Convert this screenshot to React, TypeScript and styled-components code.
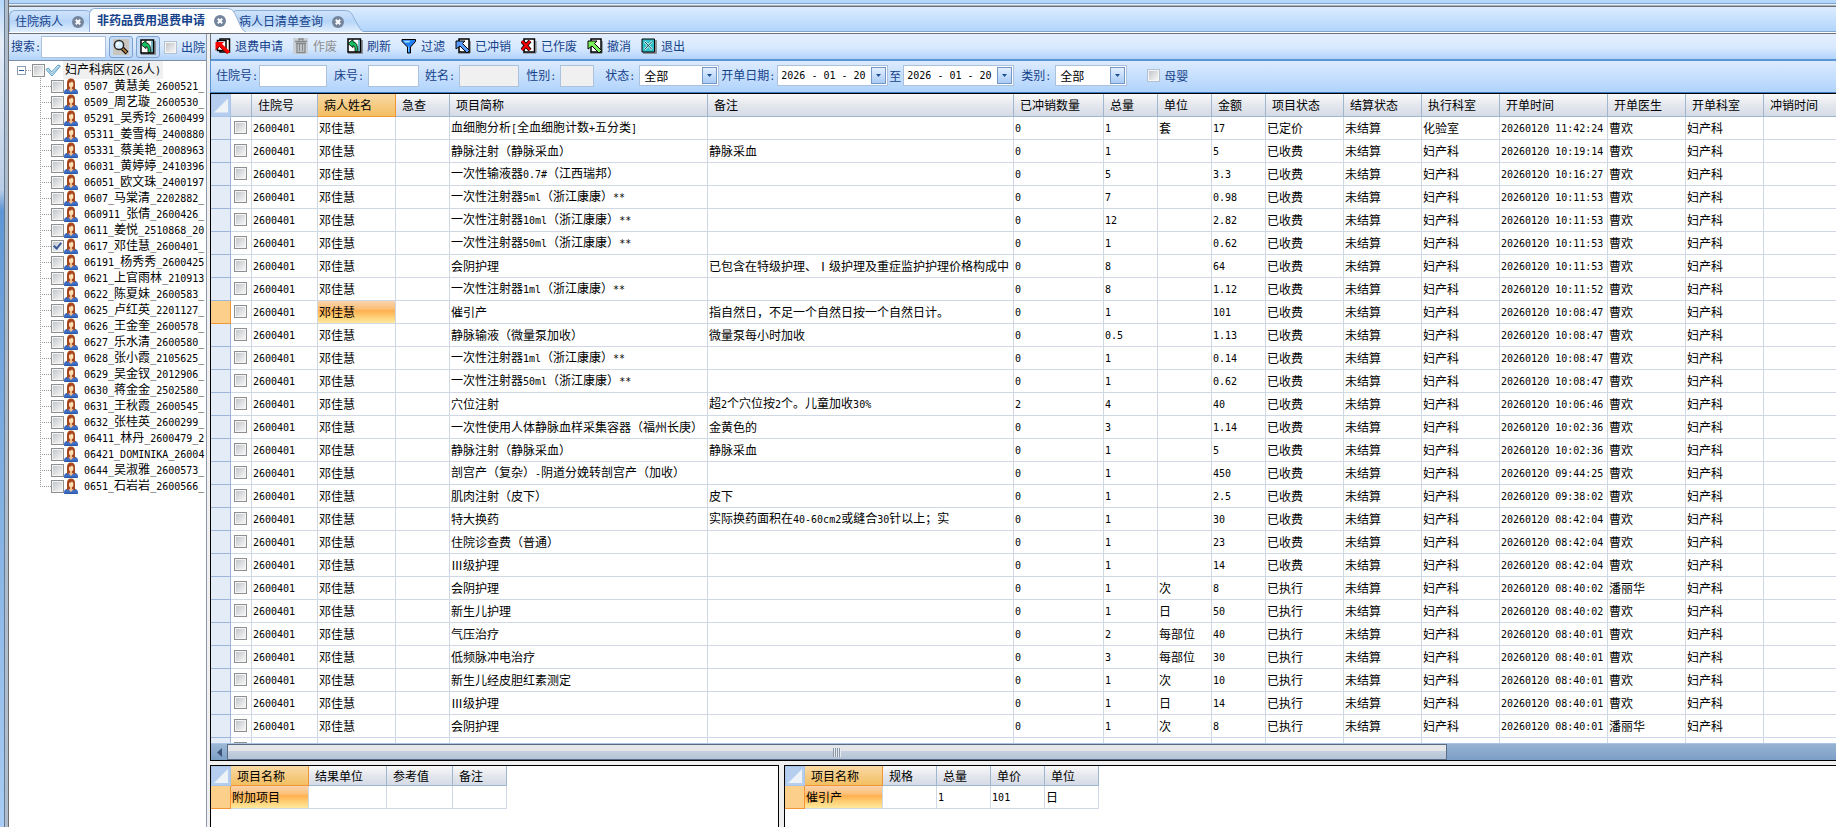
import React from "react";
import styled, { createGlobalStyle, css } from "styled-components";

const INK = "#15428b";

const GlobalStyle = createGlobalStyle`
  *, *::before, *::after { box-sizing: border-box; }
  html, body { margin: 0; height: 100%; overflow: hidden; }
  body, button, input, select, table {
    font-family: "Noto Sans CJK SC", "Liberation Sans", sans-serif;
    font-size: 12px;
    line-height: 16px;
    color: #000;
  }
`;

/* ---------- text: half-width characters take exactly half a Chinese glyph ---------- */

const Half = styled.span`
  font-family: "DejaVu Sans Mono", monospace;
  font-size: 10px;
  white-space: pre;
`;

function Mixed({ children }: { children: string }) {
  return (
    <>
      {children
        .split(/([\x20-\x7e]+)/)
        .filter(Boolean)
        .map((part, i) => (/^[\x20-\x7e]/.test(part) ? <Half key={i}>{part}</Half> : part))}
    </>
  );
}

/* ---------- window frame ---------- */

const Window = styled.div`
  display: flex;
  height: 100vh;
  overflow: hidden;
  background: #fff;
  white-space: nowrap;
`;

const LeftFrame = styled.div`
  display: flex;
  flex: 0 0 9px;
  background: linear-gradient(#b4d6fb, #e6eef8 40px, #b9cde6 190px, #5f97d6 210px, #a9cdf3);
`;

const FrameEdge = styled.div`
  width: 5px;
  margin-left: 4px;
  border-left: 1px solid #64788f;
  border-right: 1px solid #6d6e70;
  background: #aebccc;
`;

const Main = styled.div`
  flex: 1;
  min-width: 0;
  display: flex;
  flex-direction: column;
`;

const TopEdge = styled.div`
  flex: 0 0 7px;
  background: linear-gradient(#b3d6fd 3px, #7fa3cb 3px 4px, #e8f1fb 4px 5px, #aab3b8 5px 6px, #6c6f72 6px);
`;

const TabStrip = styled.nav`
  flex: 0 0 27px;
  display: flex;
  align-items: flex-end;
  padding-bottom: 2px;
  background: linear-gradient(#dcecfe, #b2d5fc 24px, #83a6cb 24px 25px, #fff 25px 26px, #6c6f75 26px);
`;

const TabShell = styled.div<{ $active?: boolean; $over?: boolean }>`
  position: relative;
  z-index: ${(p) => (p.$active ? 2 : 1)};
  display: flex;
  height: ${(p) => (p.$active ? 24 : 22)}px;
  margin-left: ${(p) => (p.$over ? -15 : 0)}px;
`;

const TabBody = styled.div<{ $active?: boolean; $over?: boolean }>`
  display: flex;
  align-items: center;
  gap: 9px;
  padding-left: ${(p) => (p.$over ? 7 : 5)}px;
  border-top: 1px solid #8fb0d6;
  border-left: 1px solid #8fb0d6;
  border-radius: 6px 0 0 0;
  background: ${(p) => (p.$active ? "#fff" : "linear-gradient(#cfe3fb, #b7d5f8 50%, #e2effd)")};
`;

const TabLabel = styled.button<{ $active?: boolean }>`
  padding: 0 0 1px;
  border: 0;
  background: none;
  color: ${INK};
  font-weight: ${(p) => (p.$active ? 700 : 400)};
`;

const CloseButton = styled.button`
  display: flex;
  padding: 0;
  border: 0;
  background: none;
`;

function CloseIcon() {
  return (
    <svg width="12" height="12" viewBox="0 0 12 12" aria-hidden="true">
      <circle cx="6" cy="6" r="6" fill="#74859c" />
      <path d="M3.8 3.8l4.4 4.4M8.2 3.8L3.8 8.2" stroke="#fff" strokeWidth="2" />
    </svg>
  );
}

function TabCap({ active }: { active?: boolean }) {
  const h = active ? 24 : 22;
  const shape = `M0 .5 C7 .5 8 4 10 8 L15 ${h - 5} Q17 ${h - 1} 20 ${h}`;
  return (
    <svg width="20" height={h} viewBox={`0 0 20 ${h}`} aria-hidden="true">
      <defs>
        <linearGradient id="tabCap" x1="0" y1="0" x2="0" y2="1">
          <stop offset="0" stopColor="#cfe3fb" />
          <stop offset=".5" stopColor="#b7d5f8" />
          <stop offset="1" stopColor="#e2effd" />
        </linearGradient>
      </defs>
      <path d={`${shape} H0Z`} fill={active ? "#fff" : "url(#tabCap)"} />
      <path d={shape} fill="none" stroke="#8fb0d6" />
    </svg>
  );
}

function Tab({ label, active, over }: { label: string; active?: boolean; over?: boolean }) {
  return (
    <TabShell $active={active} $over={over}>
      <TabBody $active={active} $over={over}>
        <TabLabel $active={active}>{label}</TabLabel>
        <CloseButton aria-label={`关闭${label}`}>
          <CloseIcon />
        </CloseButton>
      </TabBody>
      <TabCap active={active} />
    </TabShell>
  );
}

/* ---------- form parts ---------- */

const Check = styled.input.attrs({ type: "checkbox" })<{ $soft?: boolean }>`
  appearance: none;
  flex: none;
  display: block;
  position: relative;
  width: 13px;
  height: 13px;
  margin: 0;
  border: 1px solid ${(p) => (p.$soft ? "#b4c1d0" : "#8e8f8f")};
  background: linear-gradient(135deg, #c2c6cb, #f6f6f6) center / 9px 9px no-repeat #f4f4f4;
  &:checked::after {
    content: "";
    position: absolute;
    left: 3px;
    top: 0;
    width: 5px;
    height: 8px;
    border: solid #3b5a9a;
    border-width: 0 2px 2px 0;
    transform: rotate(40deg);
  }
`;

const Box = styled.input<{ $w: number }>`
  width: ${(p) => p.$w}px;
  height: 22px;
  padding: 0 3px;
  border: 1px solid #abc1de;
  background: #fff;
  &:disabled { background: #f0f0f0; }
`;

const SelectFrame = styled.div<{ $w: number }>`
  display: flex;
  align-items: center;
  width: ${(p) => p.$w}px;
  height: 21px;
  padding: 1px;
  border: 1px solid #abc1de;
  background: #fff;
`;

const PlainSelect = styled.select`
  appearance: none;
  flex: 1;
  min-width: 0;
  height: 16px;
  padding: 0 0 0 3px;
  border: 0;
  background: none;
`;

const DateInput = styled.input`
  flex: 1;
  min-width: 0;
  height: 16px;
  padding: 0 0 0 2px;
  border: 0;
  background: none;
  font-family: "DejaVu Sans Mono", monospace;
  font-size: 10px;
`;

const dropLook = css`
  display: flex;
  align-items: center;
  justify-content: center;
  flex: 0 0 15px;
  height: 17px;
  padding: 0;
  border: 1px solid #7397c6;
  background: linear-gradient(#e3effe, #a9cbf5);
`;

const DropButton = styled.button`${dropLook}`;
const DropMark = styled.span`${dropLook}`;

function DownArrow() {
  return (
    <svg width="5" height="3" viewBox="0 0 5 3" aria-hidden="true">
      <path d="M0 0h5L2.500 3z" fill="#1d4f92" />
    </svg>
  );
}

/* ---------- left panel ---------- */

const Body = styled.div`
  flex: 1;
  min-height: 0;
  display: flex;
  background: #f0f0f0;
`;

const Side = styled.aside`
  flex: 0 0 198px;
  display: flex;
  flex-direction: column;
  overflow: hidden;
  border-right: 1px solid #8a99ac;
  background: #fff;
`;

const SearchBar = styled.div`
  flex: 0 0 27px;
  display: flex;
  align-items: center;
  padding-left: 2px;
  overflow: hidden;
  border-bottom: 1px solid #7e8fa3;
  background: linear-gradient(#e3effe, #d6e8fd 50%, #b1d3fb);
  color: ${INK};
`;

const SearchLabel = styled.label`
  flex: none;
  color: ${INK};
`;

const IconButton = styled.button`
  flex: none;
  display: flex;
  align-items: center;
  justify-content: center;
  width: 24px;
  height: 22px;
  margin-left: 3px;
  padding: 0;
  border: 1px solid #7da2ce;
  border-radius: 3px;
  background: #c3dbf7;
`;

const TickLabel = styled.label`
  flex: none;
  display: flex;
  align-items: center;
  gap: 4px;
  margin-left: 4px;
`;

const Tree = styled.ul`
  margin: 0;
  padding: 1px 0 0 8px;
  list-style: none;
`;

const TreeRow = styled.div`
  display: flex;
  align-items: center;
  height: 16px;
`;

const Children = styled.ul`
  margin: 0;
  padding: 0 0 0 23px;
  list-style: none;
`;

const Connector = styled.span<{ $last?: boolean }>`
  flex: 0 0 11px;
  height: 16px;
  background:
    repeating-linear-gradient(#999 0 1px, transparent 1px 2px) 0 0 / 1px ${(p) => (p.$last ? "8px" : "16px")} no-repeat,
    repeating-linear-gradient(90deg, #999 0 1px, transparent 1px 2px) 0 8px / 11px 1px no-repeat;
`;

const Dots = styled.span`
  flex: 0 0 6px;
  height: 1px;
  background: repeating-linear-gradient(90deg, #999 0 1px, transparent 1px 2px);
`;

const Expander = styled.button`
  flex: none;
  width: 9px;
  height: 9px;
  padding: 0;
  border: 1px solid #8c9db5;
  background: linear-gradient(#2c5aa0, #2c5aa0) center / 5px 1px no-repeat #fff;
`;

const RootName = styled.span`
  margin-left: 2px;
  padding: 0 2px;
  background: #f0f0f0;
`;

const PatientName = styled.span`
  margin-left: 6px;
`;

function PersonIcon() {
  return (
    <svg width="14" height="16" viewBox="0 0 14 16" aria-hidden="true">
      <path d="M0 16v-2.500Q1 10.500 5 10.500h4q4 0 5 3V16z" fill="#3f6fc4" />
      <path d="M3 12.500V4.500Q3.400.500 7 .500t4 4v8L9 11.200H5z" fill="#a8461c" />
      <path d="M5 5Q7 4.600 8 3.500L9.300 5v2.800Q8.800 9.600 7 9.600T5 7.800z" fill="#fbdcb4" />
      <path d="M6 9h2v2l1.400.500L7 14l-2.400-2.500L6 11z" fill="#f3c08d" />
      <path d="M1 15.300h12" stroke="#2b56a5" />
    </svg>
  );
}

function DoubleCheckIcon() {
  return (
    <svg width="16" height="14" viewBox="0 0 16 14" aria-hidden="true">
      <path d="M1 6.500l2.500-1.500 3 4L13 2l2.500 1L7 13z" fill="#d6e9f5" stroke="#5b9fc4" strokeLinejoin="round" />
      <path d="M3 6.500L6.800 11 14 3.500" fill="none" stroke="#7fb6d3" />
    </svg>
  );
}

const patients = [
  "0507_黄慧美_2600521_", "0509_周艺璇_2600530_", "05291_吴秀玲_2600499", "05311_姜雪梅_2400880",
  "05331_蔡美艳_2008963", "06031_黄婷婷_2410396", "06051_欧文珠_2400197", "0607_马棠清_2202882_",
  "060911_张倩_2600426_", "0611_姜悦_2510868_20", "0617_邓佳慧_2600401_", "06191_杨秀秀_2600425",
  "0621_上官雨林_210913", "0622_陈夏妹_2600583_", "0625_卢红英_2201127_", "0626_王金奎_2600578_",
  "0627_乐水清_2600580_", "0628_张小霞_2105625_", "0629_吴金钗_2012906_", "0630_蒋金金_2502580_",
  "0631_王秋霞_2600545_", "0632_张桂英_2600299_", "06411_林丹_2600479_2", "06421_DOMINIKA_26004",
  "0644_吴淑雅_2600573_", "0651_石岩岩_2600566_",
];

function PatientTree() {
  return (
    <Tree>
      <li>
        <TreeRow>
          <Expander aria-label="折叠" />
          <Dots />
          <Check aria-label="妇产科病区" />
          <DoubleCheckIcon />
          <RootName>
            <Mixed>妇产科病区(26人)</Mixed>
          </RootName>
        </TreeRow>
        <Children>
          {patients.map((name, i) => (
            <li key={name}>
              <TreeRow>
                <Connector $last={i === patients.length - 1} />
                <Check aria-label={name} defaultChecked={name.startsWith("0617")} />
                <PersonIcon />
                <PatientName>
                  <Mixed>{name}</Mixed>
                </PatientName>
              </TreeRow>
            </li>
          ))}
        </Children>
      </li>
    </Tree>
  );
}

/* ---------- toolbar icons ---------- */

function PageArrowIcon({ color }: { color: string }) {
  return (
    <svg width="16" height="16" viewBox="0 0 16 16" aria-hidden="true">
      <path d="M3 15h12V3" fill="none" stroke="#555" />
      <path d="M4 1h10v13H4z" fill="#fff" stroke="#000" strokeWidth="1.500" />
      <path d="M1 3h9L7.500 5.500l7 7-2.500 2.500-7-7L1 11z" fill={color} stroke="#000" strokeLinejoin="miter" />
    </svg>
  );
}

function RefundIcon() {
  return (
    <svg width="16" height="16" viewBox="0 0 16 16" aria-hidden="true">
      <path d="M5 1h9.500v13H5z" fill="#fff" stroke="#000" strokeWidth="1.500" />
      <path d="M2.500 2.500h8.500v10H2.500z" fill="#fff" stroke="#000" strokeWidth="1.500" />
      <path d="M.500 4h8.500L7 6l8 7.500-2.500 2.500L4.500 8.500.500 12z" fill="#f00" />
      <path d="M.500 12l4-3.500L12.500 16" fill="none" stroke="#7a0000" />
    </svg>
  );
}

function TrashIcon() {
  return (
    <svg width="16" height="16" viewBox="0 0 16 16" aria-hidden="true">
      <path d="M0 0h15v16H0z" fill="#c9d0d8" />
      <path d="M6 2.500V1h4v1.500M2 3.500h12M4 5.500v9h8v-9M6.500 6v7M9.500 6v7M3 5.500h10" fill="none" stroke="#868686" strokeWidth="1.300" />
    </svg>
  );
}

function RefreshIcon() {
  return (
    <svg width="16" height="16" viewBox="0 0 16 16" aria-hidden="true">
      <path d="M1 15h14V2" fill="none" stroke="#777" strokeWidth="1.500" />
      <path d="M1 1h12.500v13H1z" fill="#fff" stroke="#000" strokeWidth="1.500" />
      <path d="M12 2v11" stroke="#4aa5b5" strokeWidth="1.500" />
      <path d="M1 5.500L6 1.500v2.300q5 .4 4.800 9.700H8Q8.500 8 6 7.600v2z" fill="#14c060" stroke="#000" strokeWidth=".8" />
    </svg>
  );
}

function FilterIcon() {
  return (
    <svg width="16" height="16" viewBox="0 0 16 16" aria-hidden="true">
      <path d="M1 1.500h13.500v2L9.500 9v6h-3V9L1 3.500z" fill="#1f7ff0" stroke="#000" />
      <path d="M2.500 2.800h7L8 4.500H4z" fill="#a8dcff" />
      <path d="M7.500 8.500v5" stroke="#7cc6ff" />
    </svg>
  );
}

function VoidedIcon() {
  return (
    <svg width="16" height="16" viewBox="0 0 16 16" aria-hidden="true">
      <path d="M2 15h13V3" fill="none" stroke="#777" />
      <path d="M3 1h10.500v13H3z" fill="#fff" stroke="#000" strokeWidth="1.500" />
      <path d="M1 3l8 9M9 3l-8 9" stroke="#000" strokeWidth="4" />
      <path d="M1 3l8 9M9 3l-8 9" stroke="#f00000" strokeWidth="2.600" />
    </svg>
  );
}

function ExitIcon() {
  return (
    <svg width="16" height="16" viewBox="0 0 16 16" aria-hidden="true">
      <path d="M2 15h13V2" fill="none" stroke="#777" strokeWidth="1.500" />
      <path d="M1 1h12.500v13H1z" fill="#2cc0c8" stroke="#000" />
      <path d="M3.500 3.500l7.500 8M11 3.500l-7.500 8" stroke="#d9ffff" strokeWidth="2.200" />
      <path d="M3.500 3.500l7.500 8M11 3.500l-7.500 8" stroke="#043f48" strokeWidth="1" />
    </svg>
  );
}

function SearchIcon() {
  return (
    <svg width="16" height="16" viewBox="0 0 16 16" aria-hidden="true">
      <path d="M0 0h16v16H0z" fill="#c9c6bf" />
      <path d="M9 9l5 5" stroke="#000" strokeWidth="4" />
      <path d="M9.500 9.500l4 4" stroke="#b5813a" strokeWidth="2" />
      <circle cx="6" cy="6" r="4.600" fill="#d8efff" stroke="#2a2a2a" strokeWidth="1.500" />
      <path d="M3.800 6Q4 4 6 3.800" fill="none" stroke="#fff" strokeWidth="1.500" />
    </svg>
  );
}

/* ---------- right side: toolbar and filters ---------- */

const Content = styled.main`
  flex: 1;
  min-width: 0;
  margin-left: 3px;
  display: flex;
  flex-direction: column;
`;

const Toolbar = styled.div`
  flex: 0 0 27px;
  display: flex;
  align-items: center;
  gap: 10px;
  padding: 0 0 2px 4px;
  border-left: 1px solid #6c6f75;
  border-bottom: 2px solid #5a96d6;
  background: linear-gradient(#e3effe, #d8e9fe 55%, #b1d3fb);
`;

const Tool = styled.button`
  display: flex;
  align-items: center;
  gap: 4px;
  padding: 0;
  border: 0;
  background: none;
  color: ${INK};
  &:disabled { color: #8d8d8d; }
`;

const Filters = styled.form`
  flex: 0 0 32px;
  display: flex;
  align-items: center;
  padding: 0 0 2px 5px;
  border-left: 1px solid #5a96d6;
  border-bottom: 1px solid #3f7cc0;
  background: linear-gradient(#dcebfe, #b0d3fc);
  color: ${INK};
`;

const Field = styled.label<{ $after: number; $tight?: boolean }>`
  display: flex;
  align-items: center;
  gap: ${(p) => (p.$tight ? 1 : 4)}px;
  margin-right: ${(p) => p.$after}px;
`;

const Slot = styled.div<{ $after: number }>`
  display: flex;
  align-items: center;
  gap: 2px;
  margin-right: ${(p) => p.$after}px;
`;

const tools = [
  { label: "退费申请", icon: <RefundIcon /> },
  { label: "作废", icon: <TrashIcon />, disabled: true },
  { label: "刷新", icon: <RefreshIcon /> },
  { label: "过滤", icon: <FilterIcon /> },
  { label: "已冲销", icon: <PageArrowIcon color="#5a9bff" /> },
  { label: "已作废", icon: <VoidedIcon /> },
  { label: "撤消", icon: <PageArrowIcon color="#7cf25a" /> },
  { label: "退出", icon: <ExitIcon /> },
];

function SelectBox({ width }: { width: number }) {
  return (
    <SelectFrame $w={width}>
      <PlainSelect>
        <option>全部</option>
      </PlainSelect>
      <DropMark>
        <DownArrow />
      </DropMark>
    </SelectFrame>
  );
}

function DateBox({ name }: { name: string }) {
  return (
    <SelectFrame $w={111}>
      <DateInput aria-label={name} defaultValue="2026 - 01 - 20" />
      <DropButton type="button" aria-label={`选择${name}`}>
        <DownArrow />
      </DropButton>
    </SelectFrame>
  );
}

/* ---------- tables ---------- */

const GridFrame = styled.section`
  flex: 1;
  min-height: 0;
  display: flex;
  flex-direction: column;
  border: solid #000;
  border-width: 1px 0 1px 1px;
  background: #fff;
`;

const GridScroll = styled.div`
  flex: 1;
  min-height: 0;
  overflow: hidden;
`;

const Grid = styled.table<{ $fill?: boolean }>`
  table-layout: fixed;
  border-collapse: separate;
  border-spacing: 0;
  width: ${(p) => (p.$fill ? "100%" : "0")};
  ${(p) => p.$fill && "tr > :last-child { border-right: 0; }"}
`;

const Head = styled.th<{ $hot?: boolean }>`
  height: 23px;
  padding: 0 0 0 6px;
  overflow: hidden;
  text-align: left;
  font-weight: 400;
  border: solid ${(p) => (p.$hot ? "#f29536" : "#9eb6ce")};
  border-width: 0 1px 1px 0;
  background: ${(p) => (p.$hot ? "linear-gradient(#f9d9a6, #f3bf62)" : "linear-gradient(#fafafa, #e4e7ed 50%, #d5dbe6)")};
`;

const SmallHead = styled(Head)`
  height: 20px;
`;

const Corner = styled.td`
  padding: 0;
  border: 1px solid #a9c4e9;
  background: #b5cdee;
`;

const CornerMark = styled.span`
  display: block;
  width: 14px;
  height: 14px;
  margin: 0 auto;
  background: #eef3f8;
  clip-path: polygon(100% 0, 100% 100%, 0 100%);
`;

const Cell = styled.td<{ $hot?: boolean }>`
  height: 23px;
  padding: 0 0 1px 1px;
  overflow: hidden;
  border: solid #d0d7e5;
  border-width: 0 1px 1px 0;
  background: ${(p) => (p.$hot ? "linear-gradient(#fad3ad, #fcc078 35%, #ffb050 45%, #ffd27a 75%, #ffe89c)" : "#fff")};
`;

const RowMark = styled.td<{ $hot?: boolean }>`
  height: 23px;
  padding: 0;
  border: solid ${(p) => (p.$hot ? "#f29536" : "#9eb6d8")};
  border-width: 0 1px 1px 0;
  background: ${(p) => (p.$hot ? "#fccf8b" : "#e4ecf7")};
`;

const CheckCell = styled(Cell)`
  padding-left: 3px;
`;

const ScrollTrack = styled.div`
  flex: 0 0 17px;
  display: flex;
  background: linear-gradient(#97b2d2, #7c9fc6);
  border-top: 1px solid #a9c4e4;
`;

const ScrollArrow = styled.button`
  flex: 0 0 17px;
  display: flex;
  align-items: center;
  justify-content: center;
  padding: 0;
  border: 0;
  border-right: 1px solid #5a6b86;
  background: linear-gradient(#9db7d6, #7c9fc6);
`;

const ScrollThumb = styled.div`
  flex: 0 0 75%;
  display: flex;
  align-items: center;
  justify-content: center;
  border: 1px solid #5a6b86;
  border-left: 0;
  background: linear-gradient(#e4e6ea 6px, #c4d0de 6px, #b4c4d6);
`;

const Grip = styled.span`
  width: 8px;
  height: 9px;
  background: repeating-linear-gradient(90deg, #8d97a5 0 1px, #e6ebf1 1px 2px);
`;

const columns: [string, number | undefined][] = [
  ["住院号", 66], ["病人姓名", 78], ["急查", 54], ["项目简称", 258], ["备注", 306], ["已冲销数量", 90],
  ["总量", 54], ["单位", 54], ["金额", 54], ["项目状态", 78], ["结算状态", 78], ["执行科室", 78],
  ["开单时间", 108], ["开单医生", 78], ["开单科室", 78], ["冲销时间", undefined],
];

type Charge = [item: string, note: string, reversed: string, total: string, unit: string, amount: string, state: string, dept: string, time: string, doctor: string];

const charges: Charge[] = [
  ["血细胞分析[全血细胞计数+五分类]", "", "0", "1", "套", "17", "已定价", "化验室", "11:42:24", "曹欢"],
  ["静脉注射（静脉采血）", "静脉采血", "0", "1", "", "5", "已收费", "妇产科", "10:19:14", "曹欢"],
  ["一次性输液器0.7#（江西瑞邦）", "", "0", "5", "", "3.3", "已收费", "妇产科", "10:16:27", "曹欢"],
  ["一次性注射器5ml（浙江康康）**", "", "0", "7", "", "0.98", "已收费", "妇产科", "10:11:53", "曹欢"],
  ["一次性注射器10ml（浙江康康）**", "", "0", "12", "", "2.82", "已收费", "妇产科", "10:11:53", "曹欢"],
  ["一次性注射器50ml（浙江康康）**", "", "0", "1", "", "0.62", "已收费", "妇产科", "10:11:53", "曹欢"],
  ["会阴护理", "已包含在特级护理、Ⅰ级护理及重症监护护理价格构成中", "0", "8", "", "64", "已收费", "妇产科", "10:11:53", "曹欢"],
  ["一次性注射器1ml（浙江康康）**", "", "0", "8", "", "1.12", "已收费", "妇产科", "10:11:52", "曹欢"],
  ["催引产", "指自然日，不足一个自然日按一个自然日计。", "0", "1", "", "101", "已收费", "妇产科", "10:08:47", "曹欢"],
  ["静脉输液（微量泵加收）", "微量泵每小时加收", "0", "0.5", "", "1.13", "已收费", "妇产科", "10:08:47", "曹欢"],
  ["一次性注射器1ml（浙江康康）**", "", "0", "1", "", "0.14", "已收费", "妇产科", "10:08:47", "曹欢"],
  ["一次性注射器50ml（浙江康康）**", "", "0", "1", "", "0.62", "已收费", "妇产科", "10:08:47", "曹欢"],
  ["穴位注射", "超2个穴位按2个。儿童加收30%", "2", "4", "", "40", "已收费", "妇产科", "10:06:46", "曹欢"],
  ["一次性使用人体静脉血样采集容器（福州长庚）", "金黄色的", "0", "3", "", "1.14", "已收费", "妇产科", "10:02:36", "曹欢"],
  ["静脉注射（静脉采血）", "静脉采血", "0", "1", "", "5", "已收费", "妇产科", "10:02:36", "曹欢"],
  ["剖宫产（复杂）-阴道分娩转剖宫产（加收）", "", "0", "1", "", "450", "已收费", "妇产科", "09:44:25", "曹欢"],
  ["肌肉注射（皮下）", "皮下", "0", "1", "", "2.5", "已收费", "妇产科", "09:38:02", "曹欢"],
  ["特大换药", "实际换药面积在40-60cm2或缝合30针以上；实", "0", "1", "", "30", "已收费", "妇产科", "08:42:04", "曹欢"],
  ["住院诊查费（普通）", "", "0", "1", "", "23", "已收费", "妇产科", "08:42:04", "曹欢"],
  ["Ⅲ级护理", "", "0", "1", "", "14", "已收费", "妇产科", "08:42:04", "曹欢"],
  ["会阴护理", "", "0", "1", "次", "8", "已执行", "妇产科", "08:40:02", "潘丽华"],
  ["新生儿护理", "", "0", "1", "日", "50", "已执行", "妇产科", "08:40:02", "曹欢"],
  ["气压治疗", "", "0", "2", "每部位", "40", "已执行", "妇产科", "08:40:01", "曹欢"],
  ["低频脉冲电治疗", "", "0", "3", "每部位", "30", "已执行", "妇产科", "08:40:01", "曹欢"],
  ["新生儿经皮胆红素测定", "", "0", "1", "次", "10", "已执行", "妇产科", "08:40:01", "曹欢"],
  ["Ⅲ级护理", "", "0", "1", "日", "14", "已执行", "妇产科", "08:40:01", "曹欢"],
  ["会阴护理", "", "0", "1", "次", "8", "已执行", "妇产科", "08:40:01", "潘丽华"],
];

const SELECTED = 8;

function ChargeGrid() {
  return (
    <Grid $fill>
      <colgroup>
        <col width={20} />
        <col width={21} />
        {columns.map(([name, width]) => (
          <col key={name} width={width} />
        ))}
      </colgroup>
      <thead>
        <tr>
          <Corner>
            <CornerMark />
          </Corner>
          <Head />
          {columns.map(([name]) => (
            <Head key={name} $hot={name === "病人姓名"}>
              {name}
            </Head>
          ))}
        </tr>
      </thead>
      <tbody>
        {charges.map(([item, note, reversed, total, unit, amount, state, dept, time, doctor], i) => (
          <tr key={i}>
            <RowMark $hot={i === SELECTED} />
            <CheckCell>
              <Check aria-label={item} />
            </CheckCell>
            {["2600401", "邓佳慧", "", item, note, reversed, total, unit, amount, state, "未结算", dept, `20260120 ${time}`, doctor, "妇产科", ""].map(
              (value, c) => (
                <Cell key={c} $hot={i === SELECTED && c === 1}>
                  <Mixed>{value}</Mixed>
                </Cell>
              )
            )}
          </tr>
        ))}
        <tr>
          <RowMark />
          <CheckCell>
            <Check aria-label="下一项" />
          </CheckCell>
          {columns.map(([name]) => (
            <Cell key={name} />
          ))}
        </tr>
      </tbody>
    </Grid>
  );
}

/* ---------- bottom panels ---------- */

const Bottom = styled.div`
  flex: 0 0 66px;
  display: flex;
  gap: 5px;
  padding-top: 4px;
`;

const Panel = styled.section<{ $basis: string; $closed?: boolean }>`
  flex: ${(p) => p.$basis};
  min-width: 0;
  overflow: hidden;
  border: solid #000;
  border-width: 1px ${(p) => (p.$closed ? 1 : 0)}px 0 1px;
  background: #fff;
`;

type DetailColumn = [name: string, width: number, value: string];

function DetailGrid({ cols }: { cols: DetailColumn[] }) {
  return (
    <Grid>
      <colgroup>
        <col width={20} />
        {cols.map(([name, width]) => (
          <col key={name} width={width} />
        ))}
      </colgroup>
      <thead>
        <tr>
          <Corner>
            <CornerMark />
          </Corner>
          {cols.map(([name], i) => (
            <SmallHead key={name} $hot={i === 0}>
              {name}
            </SmallHead>
          ))}
        </tr>
      </thead>
      <tbody>
        <tr>
          <RowMark $hot />
          {cols.map(([name, , value], i) => (
            <Cell key={name} $hot={i === 0}>
              <Mixed>{value}</Mixed>
            </Cell>
          ))}
        </tr>
      </tbody>
    </Grid>
  );
}

export default function App() {
  return (
    <Window>
      <GlobalStyle />
      <LeftFrame>
        <FrameEdge />
      </LeftFrame>
      <Main>
        <TopEdge />
        <TabStrip>
          <Tab label="住院病人" />
          <Tab label="非药品费用退费申请" active over />
          <Tab label="病人日清单查询" over />
        </TabStrip>
        <Body>
          <Side>
            <SearchBar>
              <SearchLabel htmlFor="patient-search">
                <Mixed>搜索:</Mixed>
              </SearchLabel>
              <Box id="patient-search" $w={65} />
              <IconButton aria-label="搜索">
                <SearchIcon />
              </IconButton>
              <IconButton aria-label="刷新">
                <RefreshIcon />
              </IconButton>
              <TickLabel>
                <Check $soft />
                出院
              </TickLabel>
            </SearchBar>
            <PatientTree />
          </Side>
          <Content>
            <Toolbar>
              {tools.map((tool) => (
                <Tool key={tool.label} disabled={tool.disabled}>
                  {tool.icon}
                  {tool.label}
                </Tool>
              ))}
            </Toolbar>
            <Filters>
              <Field $after={7} $tight>
                <span><Mixed>住院号:</Mixed></span>
                <Box $w={68} />
              </Field>
              <Field $after={6}>
                <span><Mixed>床号:</Mixed></span>
                <Box $w={51} />
              </Field>
              <Field $after={7}>
                <span><Mixed>姓名:</Mixed></span>
                <Box $w={60} disabled />
              </Field>
              <Field $after={11}>
                <span><Mixed>性别:</Mixed></span>
                <Box $w={34} disabled />
              </Field>
              <Field $after={2}>
                <span><Mixed>状态:</Mixed></span>
                <SelectBox width={80} />
              </Field>
              <Slot $after={1}>
                <span><Mixed>开单日期:</Mixed></span>
                <DateBox name="开始日期" />
              </Slot>
              <Slot $after={7}>
                至
                <DateBox name="结束日期" />
              </Slot>
              <Field $after={16}>
                <span><Mixed>类别:</Mixed></span>
                <SelectBox width={72} />
              </Field>
              <TickLabel>
                <Check $soft />
                母婴
              </TickLabel>
            </Filters>
            <GridFrame>
              <GridScroll>
                <ChargeGrid />
              </GridScroll>
              <ScrollTrack>
                <ScrollArrow aria-label="向左滚动">
                  <svg width="5" height="9" viewBox="0 0 5 9" aria-hidden="true">
                    <path d="M5 0v9L0 4.500z" fill="#3c5377" />
                  </svg>
                </ScrollArrow>
                <ScrollThumb>
                  <Grip />
                </ScrollThumb>
              </ScrollTrack>
            </GridFrame>
            <Bottom>
              <Panel $basis="0 0 35%" $closed>
                <DetailGrid
                  cols={[["项目名称", 78, "附加项目"], ["结果单位", 78, ""], ["参考值", 66, ""], ["备注", 54, ""]]}
                />
              </Panel>
              <Panel $basis="1">
                <DetailGrid
                  cols={[["项目名称", 78, "催引产"], ["规格", 54, ""], ["总量", 54, "1"], ["单价", 54, "101"], ["单位", 54, "日"]]}
                />
              </Panel>
            </Bottom>
          </Content>
        </Body>
      </Main>
    </Window>
  );
}
